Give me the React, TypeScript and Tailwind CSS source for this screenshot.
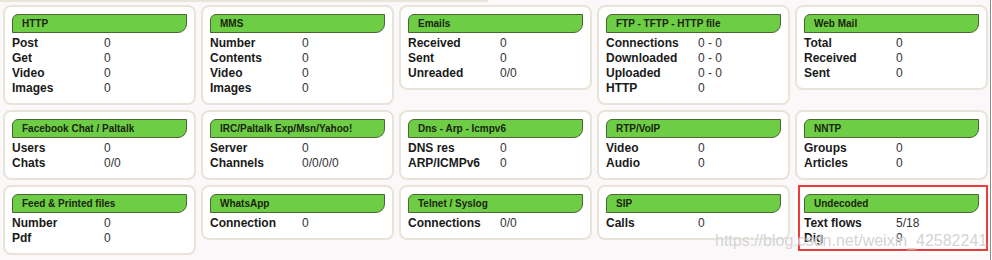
import React from 'react';

type Row = [string, string];
type Panel = { title: string; rows: Row[]; marked?: boolean };

const panels: Panel[] = [
  { title: 'HTTP', rows: [['Post', '0'], ['Get', '0'], ['Video', '0'], ['Images', '0']] },
  { title: 'MMS', rows: [['Number', '0'], ['Contents', '0'], ['Video', '0'], ['Images', '0']] },
  { title: 'Emails', rows: [['Received', '0'], ['Sent', '0'], ['Unreaded', '0/0']] },
  { title: 'FTP - TFTP - HTTP file', rows: [['Connections', '0 - 0'], ['Downloaded', '0 - 0'], ['Uploaded', '0 - 0'], ['HTTP', '0']] },
  { title: 'Web Mail', rows: [['Total', '0'], ['Received', '0'], ['Sent', '0']] },
  { title: 'Facebook Chat / Paltalk', rows: [['Users', '0'], ['Chats', '0/0']] },
  { title: 'IRC/Paltalk Exp/Msn/Yahoo!', rows: [['Server', '0'], ['Channels', '0/0/0/0']] },
  { title: 'Dns - Arp - Icmpv6', rows: [['DNS res', '0'], ['ARP/ICMPv6', '0']] },
  { title: 'RTP/VoIP', rows: [['Video', '0'], ['Audio', '0']] },
  { title: 'NNTP', rows: [['Groups', '0'], ['Articles', '0']] },
  { title: 'Feed & Printed files', rows: [['Number', '0'], ['Pdf', '0']] },
  { title: 'WhatsApp', rows: [['Connection', '0']] },
  { title: 'Telnet / Syslog', rows: [['Connections', '0/0']] },
  { title: 'SIP', rows: [['Calls', '0']] },
  { title: 'Undecoded', rows: [['Text flows', '5/18'], ['Dig', '9']], marked: true },
];

const Card: React.FC<{ panel: Panel }> = ({ panel }) => (
  <div
    className={
      'relative rounded-[8px] border-2 bg-white px-[7px] pt-[7px] pb-[7px] ' +
      (panel.marked ? 'border-transparent' : 'border-[#e8e4da]')
    }
  >
    <div className="flex h-[19px] items-center rounded-tl-[6px] rounded-br-[9px] border border-[#4d6535] bg-[#6dcd44] pl-[9px] text-[10px] font-bold text-[#1b2410]">
      {panel.title}
    </div>
    <div className="mt-[3px]">
      {panel.rows.map(([label, value], i) => (
        <div key={i} className="flex h-[15px] items-center text-[12px] leading-[15px]">
          <span className="w-[92px] shrink-0 font-bold text-[#1a1a1a]">{label}</span>
          <span className="text-[#333]">{value}</span>
        </div>
      ))}
    </div>
    {panel.marked && (
      <div className="pointer-events-none absolute top-[-2px] right-[-2px] bottom-[2px] left-[1px] border-2 border-[#ee3b3b]" />
    )}
  </div>
);

export default function App() {
  return (
    <div className="relative h-[260px] w-[991px] overflow-hidden border-r border-[#8a8a8a] bg-[#fbf8fa] font-['Liberation_Sans',Arial,sans-serif]">
      <div className="h-[2px] w-[488px] rounded-br-[8px] border-r-2 border-b-2 border-[#e9e5db]" />
      <div className="mt-[3px] grid grid-cols-[repeat(5,193px)] items-start gap-x-[5px] gap-y-[5px] pl-[3px]">
        {panels.map((p) => (
          <Card key={p.title} panel={p} />
        ))}
      </div>
      <div className="pointer-events-none absolute top-[232px] left-[715px] text-[16px] leading-[18px] text-[#c8c8c8]/80 [text-shadow:0_0_2px_#fff]">
        https://blog.csdn.net/weixin_42582241
      </div>
    </div>
  );
}
